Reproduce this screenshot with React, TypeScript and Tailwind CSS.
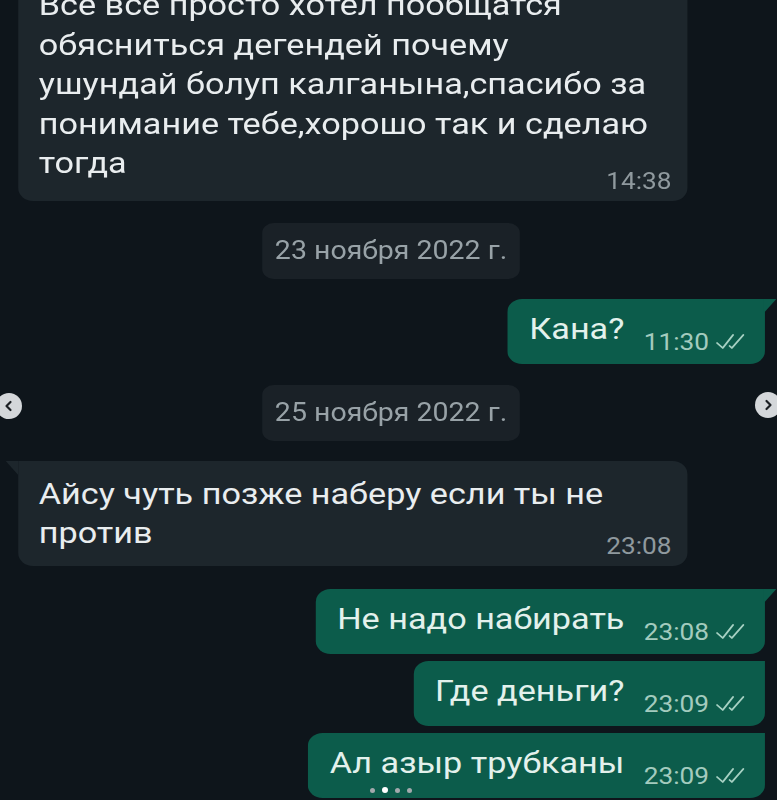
import React from "react";

const font = { fontFamily: "Roboto, 'Noto Sans', sans-serif" };

function Checks() {
  return (
    <svg width="30" height="18" viewBox="0 0 30 18" fill="none" stroke="#a6d0c2" strokeWidth="1.7" strokeLinecap="round" strokeLinejoin="round">
      <path d="M3 10 L8 15 L17 2" />
      <path d="M14 13 L16 15 L26 2" />
    </svg>
  );
}

function Out({ text, time, tail }: { text: string; time: string; tail?: boolean }) {
  return (
    <div className="self-end relative">
      {tail && (
        <div className="absolute top-0 -right-[10px] w-0 h-0 border-t-[14px] border-t-[#0c5c4b] border-r-[11px] border-r-transparent" />
      )}
      <div className="bg-[#0c5c4b] rounded-[13px] rounded-tr-none pl-[19px] pr-[15px] pt-[10px] pb-[10px] flex items-end justify-end">
        <span className="text-[30px] leading-[39px] mb-[6px] text-[#e3f1ec]">{text}</span>
        <span className="ml-[17px] text-[23px] leading-none text-[#a3cbbe] flex items-center gap-[4px]">
          {time}
          <Checks />
        </span>
      </div>
    </div>
  );
}

function Chip({ text, mt }: { text: string; mt: string }) {
  return (
    <div className={`self-start ml-[214px] ${mt} w-[226px] h-[56px] rounded-[10px] bg-[#1a2127] flex items-center justify-center text-[25px] text-[#98a2a7]`}>
      {text}
    </div>
  );
}

export default function App() {
  return (
    <div style={font} className="w-[777px] h-[800px] overflow-hidden bg-[#0e151b] relative">
      <div className="w-[682px] origin-top-left scale-x-[1.14]">
        <div className="flex flex-col -mt-[28px] pl-[16px] pr-[11px]">
          {/* first incoming */}
          <div className="w-[587px] bg-[#1d262c] rounded-[13px] pl-[18px] pr-[15px] pt-[13px] pb-[18px] text-[30px] leading-[39.5px] text-[#e9edef] relative">
            <div>
              Все все просто хотел пообщатся
              <br />
              обясниться дегендей почему
              <br />
              ушундай болуп калганына,спасибо за
              <br />
              понимание тебе,хорошо так и сделаю
              <br />
              тогда
            </div>
            <div className="absolute right-[14px] bottom-[8px] text-[23px] leading-none text-[#8f999e]">14:38</div>
          </div>

          <Chip text="23 ноября 2022 г." mt="mt-[22px]" />

          <div className="mt-[20px] flex flex-col">
            <Out text="Кана?" time="11:30" tail />
          </div>

          <Chip text="25 ноября 2022 г." mt="mt-[21px]" />

          <div className="mt-[20px] relative w-[587px]">
            <div className="absolute top-0 -left-[11px] w-0 h-0 border-t-[14px] border-t-[#1d262c] border-l-[11px] border-l-transparent" />
            <div className="bg-[#1d262c] rounded-[13px] rounded-tl-none pl-[18px] pr-[15px] pt-[13px] pb-[14px] text-[30px] leading-[39px] text-[#e9edef] relative">
              <div>
                Айсу чуть позже наберу если ты не
                <br />
                против
              </div>
              <div className="absolute right-[14px] bottom-[8px] text-[23px] leading-none text-[#8f999e]">23:08</div>
            </div>
          </div>

          <div className="mt-[23px] flex flex-col gap-[7px]">
            <Out text="Не надо набирать" time="23:08" tail />
            <Out text="Где деньги?" time="23:09" />
            <Out text="Ал азыр трубканы" time="23:09" />
          </div>
        </div>
      </div>

      {/* carousel arrows */}
      <div className="absolute left-[-4px] top-[393px] w-[26px] h-[26px] rounded-full bg-[#d4d7da] flex items-center justify-center">
        <svg width="12" height="12" viewBox="0 0 12 12" fill="none" stroke="#1b1f23" strokeWidth="2.2" strokeLinecap="round" strokeLinejoin="round">
          <path d="M7.5 2 L3.5 6 L7.5 10" />
        </svg>
      </div>
      <div className="absolute left-[755px] top-[392px] w-[26px] h-[26px] rounded-full bg-[#d4d7da] flex items-center justify-center">
        <svg width="12" height="12" viewBox="0 0 12 12" fill="none" stroke="#1b1f23" strokeWidth="2.2" strokeLinecap="round" strokeLinejoin="round">
          <path d="M4.5 2 L8.5 6 L4.5 10" />
        </svg>
      </div>

      {/* dots */}
      <div className="absolute left-[370px] top-[787px] flex items-center gap-[7px]">
        <div className="w-[5px] h-[5px] rounded-full bg-[#a3a9ad]" />
        <div className="w-[6px] h-[6px] rounded-full bg-white" />
        <div className="w-[5px] h-[5px] rounded-full bg-[#a3a9ad]" />
        <div className="w-[5px] h-[5px] rounded-full bg-[#a3a9ad]" />
      </div>
    </div>
  );
}
